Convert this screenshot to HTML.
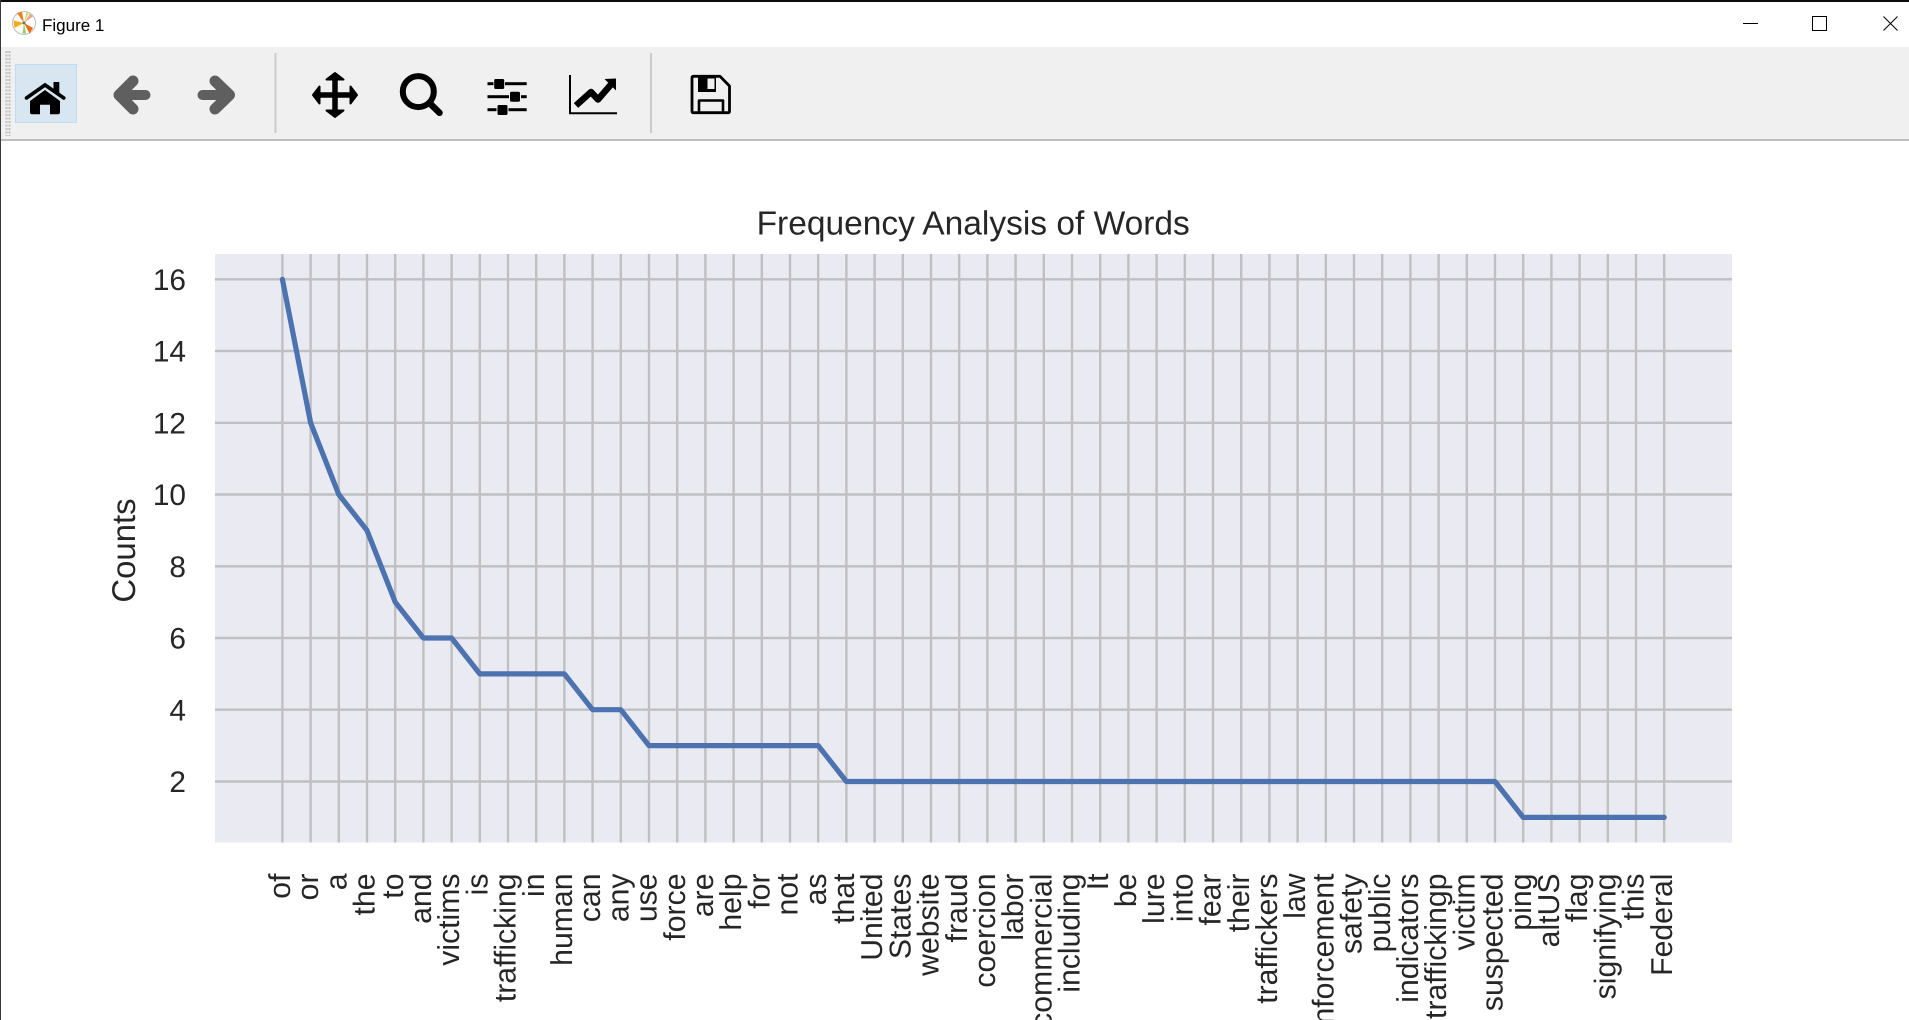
<!DOCTYPE html>
<html>
<head>
<meta charset="utf-8">
<title>Figure 1</title>
<style>
html,body{margin:0;padding:0;background:#fff;width:1909px;height:1020px;overflow:hidden}
svg{display:block;position:absolute;left:0;top:0}
text{font-family:"Liberation Sans",Arial,sans-serif;font-variant-ligatures:none;text-rendering:geometricPrecision}
.x text{font-size:30.2px;fill:#262626;text-anchor:end}
.y text{font-size:29.8px;fill:#262626;text-anchor:end}
</style>
</head>
<body>
<svg width="1909" height="1020" viewBox="0 0 1909 1020" xmlns="http://www.w3.org/2000/svg">
<rect width="1909" height="1020" fill="#fff"/>
<!-- window chrome -->
<rect x="0" y="0" width="1909" height="2" fill="#0c0c0c"/>
<rect x="0" y="0" width="1" height="1020" fill="#3a3a3a"/>
<rect x="1" y="47" width="1908" height="92" fill="#f0f0f0"/>
<rect x="1" y="139" width="1908" height="2" fill="#bdbdbd"/>
<!-- app icon -->
<g>
<circle cx="24" cy="23" r="11.5" fill="#fff" stroke="#bdbdbd" stroke-width="1"/>
<path d="M24 23L17 13L22 12Z" fill="#ef7d1e"/>
<path d="M24 23L33 28L29.5 33.5Z" fill="#ee6c16"/>
<path d="M24 23L13.5 20.5L14.5 28Z" fill="#f4ac1c"/>
<path d="M24 23L30 13.5L33 16.5Z" fill="#f0a888"/>
<path d="M24 23L22.5 33.5L26 33.5Z" fill="#90d060"/>
<path d="M24 23L26.5 12L29 12.5Z" fill="#c4dc70"/>
<circle cx="24" cy="23" r="1.5" fill="#707070"/>
</g>
<text x="42" y="31" font-size="17" fill="#000">Figure 1</text>
<!-- window buttons -->
<rect x="1743" y="23" width="15" height="1" fill="#000"/>
<rect x="1812.5" y="16.5" width="14" height="14" fill="none" stroke="#000" stroke-width="1"/>
<path d="M1883.5 16.5L1897.5 30.5M1897.5 16.5L1883.5 30.5" stroke="#000" stroke-width="1" fill="none"/>
<!-- grip -->
<line x1="6.5" y1="51" x2="6.5" y2="136" stroke="#bdbdbd" stroke-width="2" stroke-dasharray="2 1.5"/>
<line x1="9.5" y1="51" x2="9.5" y2="136" stroke="#bdbdbd" stroke-width="2" stroke-dasharray="2 1.5"/>
<!-- home button -->
<rect x="15.5" y="64.5" width="61" height="58" fill="#d8e6f2" stroke="#bcdcf4" stroke-width="1"/>
<path d="M53.5 82h5.8v11.5l-5.8-4z" fill="#000"/>
<path d="M26.5 98L45 85L63.8 98" fill="none" stroke="#000" stroke-width="3.6" stroke-linecap="round" stroke-linejoin="miter"/>
<path d="M45 90L60 101V112.3a2 2 0 0 1-2 2H50V104.7H40V114.3H32a2 2 0 0 1-2-2V101Z" fill="#000"/>
<!-- back / forward -->
<g fill="none" stroke="#5f5f5f" stroke-linecap="round" stroke-linejoin="round">
<path d="M133 81L119 95L133 109" stroke-width="11"/>
<path d="M120 95H145.5" stroke-width="10"/>
<path d="M215 81L229.5 95L215 109" stroke-width="11"/>
<path d="M228 95H202.5" stroke-width="10"/>
</g>
<!-- separators -->
<rect x="274.5" y="53" width="2" height="80" fill="#cbcbcb"/>
<rect x="650" y="53" width="2" height="80" fill="#cbcbcb"/>
<!-- move -->
<g fill="#000" stroke="#000" stroke-width="2" stroke-linejoin="round">
<path d="M335 73L343.5 79.5H326.5Z"/>
<path d="M335 117L343.5 110.5H326.5Z"/>
<path d="M313 95L319.5 86.5V103.5Z"/>
<path d="M357 95L350.5 86.5V103.5Z"/>
</g>
<path d="M335 78V112M318 95H352" stroke="#000" stroke-width="5.5" fill="none"/>
<!-- zoom -->
<circle cx="418.3" cy="91.6" r="15.5" fill="none" stroke="#000" stroke-width="6"/>
<path d="M430 103.5L439.5 112.8" stroke="#000" stroke-width="6.5" stroke-linecap="round" fill="none"/>
<!-- sliders -->
<g fill="#000">
<rect x="487.5" y="82.2" width="6" height="3"/><rect x="505" y="82.2" width="21.7" height="3"/>
<rect x="494.2" y="79" width="10" height="10" rx="1.5"/>
<rect x="487.5" y="95.2" width="21.5" height="3"/><rect x="521" y="95.2" width="5.7" height="3"/>
<rect x="510" y="91.8" width="10" height="10" rx="1.5"/>
<rect x="487.5" y="108.2" width="9" height="3"/><rect x="508.5" y="108.2" width="18.2" height="3"/>
<rect x="497.5" y="105" width="10" height="10" rx="1.5"/>
</g>
<!-- chart -->
<path d="M570 75V113.3H617" fill="none" stroke="#000" stroke-width="2"/>
<path d="M576 105.5L591 92L598 99.5L611 84.5" fill="none" stroke="#000" stroke-width="6.5" stroke-linejoin="round"/>
<path d="M616 78.5V90.5L604.5 79Z" fill="#000"/>
<!-- save -->
<path d="M693.2 76.3H720L729.5 86V111.5a1.2 1.2 0 0 1-1.2 1.2H693.2a1.2 1.2 0 0 1-1.2-1.2V77.5a1.2 1.2 0 0 1 1.2-1.2Z" fill="none" stroke="#000" stroke-width="2.8" stroke-linejoin="round"/>
<rect x="698" y="76" width="18" height="16" fill="#000"/>
<rect x="707.5" y="78.5" width="7" height="10.5" fill="#f0f0f0"/>
<path d="M699 113V100.5H723V113" fill="none" stroke="#000" stroke-width="2.6" stroke-linejoin="round"/>

<!-- plot area -->
<rect x="215" y="254" width="1517" height="588.5" fill="#eaeaf2"/>
<g stroke="#c0c0c0" stroke-width="2.4" fill="none">
<path d="M215 279.3H1732M215 351H1732M215 422.8H1732M215 494.5H1732M215 566.3H1732M215 638H1732M215 709.7H1732M215 781.5H1732"/>
<path d="M282.4 254V842.5M310.6 254V842.5M338.8 254V842.5M367 254V842.5M395.2 254V842.5M423.4 254V842.5M451.6 254V842.5M479.8 254V842.5M508 254V842.5M536.2 254V842.5M564.4 254V842.5M592.6 254V842.5M620.8 254V842.5M649 254V842.5M677.2 254V842.5M705.4 254V842.5M733.6 254V842.5M761.8 254V842.5M790 254V842.5M818.2 254V842.5M846.4 254V842.5M874.6 254V842.5M902.8 254V842.5M931 254V842.5M959.2 254V842.5M987.4 254V842.5M1015.6 254V842.5M1043.8 254V842.5M1072 254V842.5M1100.2 254V842.5M1128.4 254V842.5M1156.6 254V842.5M1184.8 254V842.5M1213 254V842.5M1241.2 254V842.5M1269.4 254V842.5M1297.6 254V842.5M1325.8 254V842.5M1354 254V842.5M1382.2 254V842.5M1410.4 254V842.5M1438.6 254V842.5M1466.8 254V842.5M1495 254V842.5M1523.2 254V842.5M1551.4 254V842.5M1579.6 254V842.5M1607.8 254V842.5M1636 254V842.5M1664.2 254V842.5"/>
</g>
<path d="M282.4 279.3L310.6 422.8L338.8 494.5L367 530.4L395.2 602.1L423.4 638L451.6 638L479.8 673.9L564.4 673.9L592.6 709.7L620.8 709.7L649 745.6L818.2 745.6L846.4 781.5L1495 781.5L1523.2 817.4L1664.2 817.4" fill="none" stroke="#4c72b0" stroke-width="5.2" stroke-linecap="round" stroke-linejoin="round"/>

<!-- title and axis labels -->
<text x="973.2" y="234.3" font-size="33.5" fill="#262626" text-anchor="middle">Frequency Analysis of Words</text>
<text transform="translate(135 550.5) rotate(-90)" font-size="32.9" fill="#262626" text-anchor="middle">Counts</text>
<g class="y">
<text x="186" y="290">16</text>
<text x="186" y="361.7">14</text>
<text x="186" y="433.5">12</text>
<text x="186" y="505.2">10</text>
<text x="186" y="577">8</text>
<text x="186" y="648.7">6</text>
<text x="186" y="720.4">4</text>
<text x="186" y="792.2">2</text>
</g>
<g class="x" transform="rotate(-90)">
<text x="-873.5" y="290">of</text>
<text x="-873.5" y="318.2">or</text>
<text x="-873.5" y="346.4">a</text>
<text x="-873.5" y="374.6">the</text>
<text x="-873.5" y="402.8">to</text>
<text x="-873.5" y="431">and</text>
<text x="-873.5" y="459.2">victims</text>
<text x="-873.5" y="487.4">is</text>
<text x="-873.5" y="515.6">trafficking</text>
<text x="-873.5" y="543.8">in</text>
<text x="-873.5" y="572">human</text>
<text x="-873.5" y="600.2">can</text>
<text x="-873.5" y="628.4">any</text>
<text x="-873.5" y="656.6">use</text>
<text x="-873.5" y="684.8">force</text>
<text x="-873.5" y="713">are</text>
<text x="-873.5" y="741.2">help</text>
<text x="-873.5" y="769.4">for</text>
<text x="-873.5" y="797.6">not</text>
<text x="-873.5" y="825.8">as</text>
<text x="-873.5" y="854">that</text>
<text x="-873.5" y="882.2">United</text>
<text x="-873.5" y="910.4">States</text>
<text x="-873.5" y="938.6">website</text>
<text x="-873.5" y="966.8">fraud</text>
<text x="-873.5" y="995">coercion</text>
<text x="-873.5" y="1023.2">labor</text>
<text x="-873.5" y="1051.4">commercial</text>
<text x="-873.5" y="1079.6">including</text>
<text x="-873.5" y="1107.8">It</text>
<text x="-873.5" y="1136">be</text>
<text x="-873.5" y="1164.2">lure</text>
<text x="-873.5" y="1192.4">into</text>
<text x="-873.5" y="1220.6">fear</text>
<text x="-873.5" y="1248.8">their</text>
<text x="-873.5" y="1277">traffickers</text>
<text x="-873.5" y="1305.2">law</text>
<text x="-873.5" y="1333.4">enforcement</text>
<text x="-873.5" y="1361.6">safety</text>
<text x="-873.5" y="1389.8">public</text>
<text x="-873.5" y="1418">indicators</text>
<text x="-873.5" y="1446.2">traffickingp</text>
<text x="-873.5" y="1474.4">victim</text>
<text x="-873.5" y="1502.6">suspected</text>
<text x="-873.5" y="1530.8">ping</text>
<text x="-873.5" y="1559">altUS</text>
<text x="-873.5" y="1587.2">flag</text>
<text x="-873.5" y="1615.4">signifying</text>
<text x="-873.5" y="1643.6">this</text>
<text x="-873.5" y="1671.8">Federal</text>
</g>
</svg>
</body>
</html>
